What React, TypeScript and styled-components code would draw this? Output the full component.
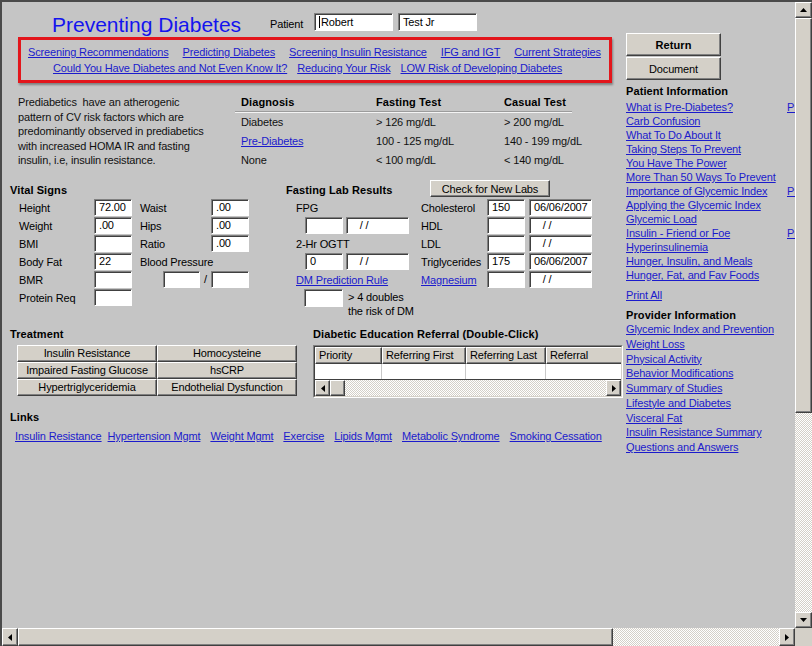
import React from 'react';
import styled, { createGlobalStyle, css } from 'styled-components';

const GlobalStyle = createGlobalStyle`
  html, body {
    margin: 0;
    padding: 0;
    background: #c5c5c5;
  }
  body {
    font-family: "Liberation Sans", Arial, sans-serif;
    font-size: 11px;
    letter-spacing: -0.15px;
    color: #000;
  }
  * {
    box-sizing: border-box;
  }
`;

const raised = css`
  background: #d4d0c8;
  border: 1px solid;
  border-color: #fff #404040 #404040 #fff;
  box-shadow: inset -1px -1px #808080;
`;

const hatch = css`
  background-color: #fff;
  background-image: conic-gradient(#d4d0c8 25%, #fff 0 50%, #d4d0c8 0 75%, #fff 0);
  background-size: 2px 2px;
`;

const Frame = styled.div`
  width: 812px;
  height: 646px;
  display: grid;
  grid-template-columns: 1fr 17px;
  grid-template-rows: 1fr 18px;
  background: #c5c5c5;
  border-top: 2px solid #4a4a4a;
  border-left: 2px solid #4a4a4a;
  overflow: hidden;
`;

const Content = styled.div`
  display: flex;
  padding-left: 8px;
  overflow: hidden;
`;

const Main = styled.div`
  width: 616px;
  flex-shrink: 0;
  display: flex;
  flex-direction: column;
`;

/* header */

const Header = styled.div`
  display: flex;
  align-items: flex-start;
  height: 24px;
  margin-top: 11px;
`;

const Title = styled.div`
  width: 218px;
  margin-left: 42px;
  font-size: 21px;
  line-height: 24px;
  letter-spacing: 0;
  color: #1414ee;
  white-space: nowrap;
`;

const PatientLabel = styled.div`
  width: 44px;
  padding-top: 4px;
  line-height: 14px;
`;

const FieldPair = styled.div<{ $gap: number; $indent?: number }>`
  display: flex;
  gap: ${p => p.$gap}px;
  margin-left: ${p => p.$indent || 0}px;
`;

const Field = styled.div<{ $w: number; $h?: number }>`
  width: ${p => p.$w}px;
  height: ${p => p.$h || 17}px;
  flex-shrink: 0;
  background: #fff;
  border: 1px solid;
  border-color: #808080 #fff #fff #808080;
  box-shadow: inset 1px 1px #404040;
  padding-left: 4px;
  line-height: ${p => (p.$h || 17) - 2}px;
  font-size: 11px;
  white-space: pre;
  overflow: hidden;
  color: #000;
`;

const Caret = styled.span`
  display: inline-block;
  width: 1px;
  height: 12px;
  margin-right: 1px;
  vertical-align: -2px;
  background: #000;
`;

/* red nav box */

const NavBox = styled.div`
  width: 594px;
  height: 46px;
  margin-left: 8px;
  border: 3px solid #e3161c;
  box-shadow: 1px 2px 2px rgba(0, 0, 0, 0.35);
  padding-top: 4px;
`;

const NavRow = styled.div<{ $indent: number; $gap: number }>`
  display: flex;
  gap: ${p => p.$gap}px;
  padding-left: ${p => p.$indent}px;
  line-height: 16px;
  white-space: nowrap;
`;

const Link = styled.a`
  color: #1b1bcc;
  text-decoration: underline;
  white-space: nowrap;
  cursor: pointer;
`;

/* intro + diagnosis */

const Intro = styled.div`
  display: flex;
  margin-top: 11px;
`;

const Blurb = styled.p`
  width: 217px;
  margin: 1px 0 0 8px;
  line-height: 14.5px;
  color: #111;
  white-space: pre;
`;

const DiagTable = styled.div`
  width: 337px;
`;

const DiagRow = styled.div<{ $head?: boolean }>`
  display: grid;
  grid-template-columns: 135px 128px 74px;
  height: ${p => (p.$head ? 17 : 19)}px;
  line-height: ${p => (p.$head ? 17 : 19)}px;
  font-weight: ${p => (p.$head ? 700 : 400)};
  letter-spacing: ${p => (p.$head ? '0.1px' : '-0.15px')};
  color: ${p => (p.$head ? '#000' : '#111')};
  & > * {
    padding-left: 6px;
    white-space: nowrap;
  }
`;

const DiagRule = styled.div`
  height: 2px;
  border-top: 1px solid #9c9c9c;
  border-bottom: 1px solid #f4f4f4;
`;

/* vital signs + labs */

const LabSection = styled.div`
  display: flex;
  margin-top: 11px;
`;

const SectionTitle = styled.div<{ $h?: number }>`
  height: ${p => p.$h || 18}px;
  line-height: ${p => p.$h || 18}px;
  font-weight: 700;
  letter-spacing: 0.1px;
  white-space: nowrap;
`;

const Vitals = styled.div`
  width: 276px;
`;

const VitalGrid = styled.div`
  display: grid;
  grid-template-columns: 75px 38px 79px 38px;
  grid-auto-rows: 18px;
  align-items: start;
  padding-left: 9px;
`;

const Label = styled.div<{ $pad?: number; $span?: number }>`
  padding-left: ${p => p.$pad || 0}px;
  line-height: 18px;
  white-space: nowrap;
  grid-column: ${p => (p.$span ? `span ${p.$span}` : 'auto')};
`;

const BPCell = styled.div`
  display: flex;
  justify-content: flex-end;
  align-items: flex-start;
`;

const Slash = styled.span`
  width: 11px;
  text-align: center;
  line-height: 17px;
`;

const LabLeft = styled.div`
  width: 135px;
`;

const LabRows = styled.div`
  display: grid;
  grid-auto-rows: 18px;
  padding-left: 10px;
`;

const RuleRow = styled.div`
  display: flex;
  gap: 5px;
  margin-left: 8px;
  grid-row: span 2;
`;

const RuleNote = styled.div`
  margin-top: 1px;
  line-height: 14px;
  white-space: nowrap;
`;

const LabRight = styled.div`
  width: 180px;
`;

const ButtonRow = styled.div`
  height: 18px;
  padding-left: 9px;
`;

const PushButton = styled.button<{ $w: number; $h: number; $bold?: boolean }>`
  ${raised};
  width: ${p => p.$w}px;
  height: ${p => p.$h}px;
  padding: 0;
  font-family: inherit;
  font-size: 11px;
  letter-spacing: ${p => (p.$bold ? '0.1px' : '-0.15px')};
  font-weight: ${p => (p.$bold ? 700 : 400)};
  color: #000;
  text-align: center;
  white-space: nowrap;
`;

const CheckButton = styled(PushButton)`
  margin-top: -1px;
`;

const LabGrid = styled.div`
  display: grid;
  grid-template-columns: 62px 38px 63px;
  column-gap: 4px;
  grid-auto-rows: 18px;
`;

/* treatment + referral */

const TreatSection = styled.div`
  display: flex;
  margin-top: 1px;
`;

const Treatment = styled.div`
  width: 303px;
`;

const TreatGrid = styled.div`
  display: grid;
  grid-template-columns: 140px 140px;
  grid-auto-rows: 17px;
  margin: 3px 0 0 7px;
`;

const TreatButton = styled(PushButton)`
  line-height: 15px;
`;

const Referral = styled.div`
  width: 313px;
`;

const RefBox = styled.div`
  width: 310px;
  height: 53px;
  margin-top: 3px;
  border: 1px solid;
  border-color: #808080 #fff #fff #808080;
`;

const RefInner = styled.div`
  height: 100%;
  border: 1px solid;
  border-color: #404040 #d4d0c8 #d4d0c8 #404040;
  display: flex;
  flex-direction: column;
  overflow: hidden;
`;

const refCols = css`
  display: grid;
  grid-template-columns: 67px 84px 80px 90px;
`;

const RefHead = styled.div`
  ${refCols};
  height: 17px;
`;

const RefHeadCell = styled.div`
  ${raised};
  padding-left: 3px;
  line-height: 15px;
  white-space: nowrap;
  overflow: hidden;
`;

const RefRow = styled.div`
  ${refCols};
  height: 16px;
  background: #fff;
  border-bottom: 1px solid #404040;
  & > div {
    border-right: 1px solid #c8c8c8;
  }
`;

const HBar = styled.div<{ $cols: string }>`
  display: grid;
  grid-template-columns: ${p => p.$cols};
  height: 100%;
  flex: 1;
`;

const Track = styled.div`
  ${hatch};
`;

const Thumb = styled.div`
  ${raised};
`;

const ScrollButton = styled.div`
  ${raised};
  display: flex;
  align-items: center;
  justify-content: center;
`;

/* links */

const LinksSection = styled.div`
  margin-top: 11px;
`;

const LinkRow = styled.div`
  display: flex;
  gap: 10px;
  margin-top: 4px;
  padding-left: 5px;
  line-height: 14px;
  & > a:first-child {
    margin-right: -4px;
  }
`;

/* right column */

const Side = styled.div`
  width: 200px;
  flex-shrink: 0;
  padding-top: 31px;
  display: flex;
  flex-direction: column;
  align-items: flex-start;
`;

const SideButtons = styled.div`
  display: flex;
  flex-direction: column;
  gap: 1px;
`;

const SideTitle = styled.div<{ $top: number }>`
  margin-top: ${p => p.$top}px;
  line-height: 14px;
  font-weight: 700;
  letter-spacing: 0.1px;
  white-space: nowrap;
`;

const SideList = styled.div<{ $step: number; $top: number }>`
  display: grid;
  grid-template-columns: 161px 40px;
  grid-auto-rows: ${p => p.$step}px;
  line-height: ${p => p.$step}px;
  margin-top: ${p => p.$top}px;
`;

const SideSingle = styled.div<{ $top: number }>`
  margin-top: ${p => p.$top}px;
  line-height: 14px;
`;

/* scroll bars */

const VScroll = styled.div`
  display: grid;
  grid-template-rows: 16px 395px 1fr 16px;
`;

const HScroll = styled.div`
  display: grid;
  grid-template-columns: 16px 595px 1fr 16px;
`;

const Corner = styled.div`
  background: #d4d0c8;
`;

type Dir = 'up' | 'down' | 'left' | 'right';

const Arrow = ({ dir }: { dir: Dir }) => {
  const vertical = dir === 'up' || dir === 'down';
  const points = {
    up: '0,4 7,4 3.5,0',
    down: '0,0 7,0 3.5,4',
    left: '4,0 4,7 0,3.5',
    right: '0,0 0,7 4,3.5',
  }[dir];
  const w = vertical ? 7 : 4;
  const h = vertical ? 4 : 7;
  return (
    <svg width={w} height={h} viewBox={`0 0 ${w} ${h}`}>
      <polygon points={points} fill="#000" />
    </svg>
  );
};

const navTop = [
  'Screening Recommendations',
  'Predicting Diabetes',
  'Screening Insulin Resistance',
  'IFG and IGT',
  'Current Strategies',
];
const navBottom = [
  'Could You Have Diabetes and Not Even Know It?',
  'Reducing Your Risk',
  'LOW Risk of Developing Diabetes',
];

const patientLinks: [string, boolean][] = [
  ['What is Pre-Diabetes?', true],
  ['Carb Confusion', false],
  ['What To Do About It', false],
  ['Taking Steps To Prevent', false],
  ['You Have The Power', false],
  ['More Than 50 Ways To Prevent', false],
  ['Importance of Glycemic Index', true],
  ['Applying the Glycemic Index', false],
  ['Glycemic Load', false],
  ['Insulin - Friend or Foe', true],
  ['Hyperinsulinemia', false],
  ['Hunger, Insulin, and Meals', false],
  ['Hunger, Fat, and Fav Foods', false],
];

const providerLinks = [
  'Glycemic Index and Prevention',
  'Weight Loss',
  'Physical Activity',
  'Behavior Modifications',
  'Summary of Studies',
  'Lifestyle and Diabetes',
  'Visceral Fat',
  'Insulin Resistance Summary',
  'Questions and Answers',
];

const bottomLinks = [
  'Insulin Resistance',
  'Hypertension Mgmt',
  'Weight Mgmt',
  'Exercise',
  'Lipids Mgmt',
  'Metabolic Syndrome',
  'Smoking Cessation',
];

const treatments = [
  'Insulin Resistance',
  'Homocysteine',
  'Impaired Fasting Glucose',
  'hsCRP',
  'Hypertriglyceridemia',
  'Endothelial Dysfunction',
];

const diagnoses = [
  { name: 'Diabetes', fasting: '> 126 mg/dL', casual: '> 200 mg/dL' },
  { name: 'Pre-Diabetes', fasting: '100 - 125 mg/dL', casual: '140 - 199 mg/dL', link: true },
  { name: 'None', fasting: '< 100 mg/dL', casual: '< 140 mg/dL' },
];

const labs = [
  { name: 'Cholesterol', value: '150', date: '06/06/2007' },
  { name: 'HDL', value: '', date: '   / /' },
  { name: 'LDL', value: '', date: '   / /' },
  { name: 'Triglycerides', value: '175', date: '06/06/2007' },
  { name: 'Magnesium', value: '', date: '   / /', link: true },
];

const App: React.FC = () => {
  return (
    <>
      <GlobalStyle />
      <Frame>
        <Content>
          <Main>
            <Header>
              <Title>Preventing Diabetes</Title>
              <PatientLabel>Patient</PatientLabel>
              <FieldPair $gap={5}>
                <Field $w={79} $h={18}><Caret />Robert</Field>
                <Field $w={79} $h={18}>Test Jr</Field>
              </FieldPair>
            </Header>

            <NavBox>
              <NavRow $indent={7} $gap={14}>
                {navTop.map(t => <Link key={t}>{t}</Link>)}
              </NavRow>
              <NavRow $indent={32} $gap={10}>
                {navBottom.map(t => <Link key={t}>{t}</Link>)}
              </NavRow>
            </NavBox>

            <Intro>
              <Blurb>
                {'Prediabetics  have an atherogenic\npattern of CV risk factors which are\npredominantly observed in prediabetics\nwith increased HOMA IR and fasting\ninsulin, i.e, insulin resistance.'}
              </Blurb>
              <DiagTable>
                <DiagRow $head>
                  <span>Diagnosis</span>
                  <span>Fasting Test</span>
                  <span>Casual Test</span>
                </DiagRow>
                <DiagRule />
                {diagnoses.map(d => (
                  <DiagRow key={d.name}>
                    <span>{d.link ? <Link>{d.name}</Link> : d.name}</span>
                    <span>{d.fasting}</span>
                    <span>{d.casual}</span>
                  </DiagRow>
                ))}
              </DiagTable>
            </Intro>

            <LabSection>
              <Vitals>
                <SectionTitle>Vital Signs</SectionTitle>
                <VitalGrid>
                  <Label>Height</Label>
                  <Field $w={38}>72.00</Field>
                  <Label $pad={8}>Waist</Label>
                  <Field $w={38}>.00</Field>

                  <Label>Weight</Label>
                  <Field $w={38}>.00</Field>
                  <Label $pad={8}>Hips</Label>
                  <Field $w={38}>.00</Field>

                  <Label>BMI</Label>
                  <Field $w={38} />
                  <Label $pad={8}>Ratio</Label>
                  <Field $w={38}>.00</Field>

                  <Label>Body Fat</Label>
                  <Field $w={38}>22</Field>
                  <Label $pad={8} $span={2}>Blood Pressure</Label>

                  <Label>BMR</Label>
                  <Field $w={38} />
                  <BPCell>
                    <Field $w={37} />
                    <Slash>/</Slash>
                  </BPCell>
                  <Field $w={38} />

                  <Label>Protein Req</Label>
                  <Field $w={38} />
                </VitalGrid>
              </Vitals>

              <LabLeft>
                <SectionTitle>Fasting Lab Results</SectionTitle>
                <LabRows>
                  <Label>FPG</Label>
                  <FieldPair $gap={3} $indent={9}>
                    <Field $w={38} />
                    <Field $w={63}>{'   / /'}</Field>
                  </FieldPair>
                  <Label>2-Hr OGTT</Label>
                  <FieldPair $gap={3} $indent={9}>
                    <Field $w={38}>0</Field>
                    <Field $w={63}>{'   / /'}</Field>
                  </FieldPair>
                  <Label><Link>DM Prediction Rule</Link></Label>
                  <RuleRow>
                    <Field $w={39} $h={18} />
                    <RuleNote>{'> 4 doubles'}<br />the risk of DM</RuleNote>
                  </RuleRow>
                </LabRows>
              </LabLeft>

              <LabRight>
                <ButtonRow>
                  <CheckButton $w={120} $h={17}>Check for New Labs</CheckButton>
                </ButtonRow>
                <LabGrid>
                  {labs.map(l => (
                    <React.Fragment key={l.name}>
                      <Label>{l.link ? <Link>{l.name}</Link> : l.name}</Label>
                      <Field $w={38}>{l.value}</Field>
                      <Field $w={63}>{l.date}</Field>
                    </React.Fragment>
                  ))}
                </LabGrid>
              </LabRight>
            </LabSection>

            <TreatSection>
              <Treatment>
                <SectionTitle $h={16}>Treatment</SectionTitle>
                <TreatGrid>
                  {treatments.map(t => (
                    <TreatButton key={t} $w={140} $h={17}>{t}</TreatButton>
                  ))}
                </TreatGrid>
              </Treatment>
              <Referral>
                <SectionTitle $h={16}>Diabetic Education Referral (Double-Click)</SectionTitle>
                <RefBox>
                  <RefInner>
                    <RefHead>
                      <RefHeadCell>Priority</RefHeadCell>
                      <RefHeadCell>Referring First</RefHeadCell>
                      <RefHeadCell>Referring Last</RefHeadCell>
                      <RefHeadCell>Referral</RefHeadCell>
                    </RefHead>
                    <RefRow>
                      <div />
                      <div />
                      <div />
                      <div />
                    </RefRow>
                    <HBar $cols="15px 15px 1fr 15px">
                      <ScrollButton><Arrow dir="left" /></ScrollButton>
                      <Thumb />
                      <Track />
                      <ScrollButton><Arrow dir="right" /></ScrollButton>
                    </HBar>
                  </RefInner>
                </RefBox>
              </Referral>
            </TreatSection>

            <LinksSection>
              <SectionTitle $h={16}>Links</SectionTitle>
              <LinkRow>
                {bottomLinks.map(t => <Link key={t}>{t}</Link>)}
              </LinkRow>
            </LinksSection>
          </Main>

          <Side>
            <SideButtons>
              <PushButton $w={95} $h={23} $bold>Return</PushButton>
              <PushButton $w={95} $h={23}>Document</PushButton>
            </SideButtons>
            <SideTitle $top={4}>Patient Information</SideTitle>
            <SideList $step={14} $top={2}>
              {patientLinks.map(([t, print]) => (
                <React.Fragment key={t}>
                  <div><Link>{t}</Link></div>
                  <div>{print && <Link>Print</Link>}</div>
                </React.Fragment>
              ))}
            </SideList>
            <SideSingle $top={6}><Link>Print All</Link></SideSingle>
            <SideTitle $top={6}>Provider Information</SideTitle>
            <SideList $step={14.75} $top={0}>
              {providerLinks.map(t => (
                <React.Fragment key={t}>
                  <div><Link>{t}</Link></div>
                  <div />
                </React.Fragment>
              ))}
            </SideList>
          </Side>
        </Content>

        <VScroll>
          <ScrollButton><Arrow dir="up" /></ScrollButton>
          <Thumb />
          <Track />
          <ScrollButton><Arrow dir="down" /></ScrollButton>
        </VScroll>

        <HScroll>
          <ScrollButton><Arrow dir="left" /></ScrollButton>
          <Thumb />
          <Track />
          <ScrollButton><Arrow dir="right" /></ScrollButton>
        </HScroll>
        <Corner />
      </Frame>
    </>
  );
};

export default App;
